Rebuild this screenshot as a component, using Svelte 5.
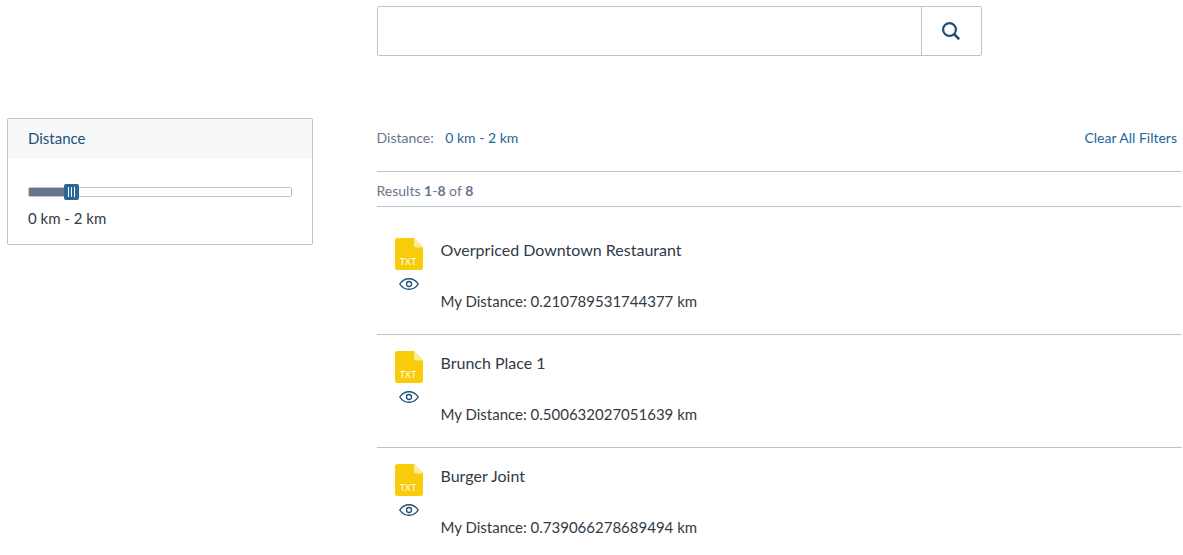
<script>
  const max = 14;
  let query = $state('');
  let distance = $state(2);

  let range = $derived(`0 km - ${distance} km`);
  let fill = $derived((distance / max) * 100);

  const results = [
    { title: 'Overpriced Downtown Restaurant', distance: '0.210789531744377' },
    { title: 'Brunch Place 1', distance: '0.500632027051639' },
    { title: 'Burger Joint', distance: '0.739066278689494' }
  ];

  function clearFilters() {
    distance = max;
  }
</script>

<div class="page">
  <form class="search" role="search" onsubmit={(e) => e.preventDefault()}>
    <input type="text" aria-label="Search" bind:value={query} />
    <button type="submit" aria-label="Search">
      <svg width="18" height="18" viewBox="0 0 18 18" fill="none" stroke="currentColor">
        <circle cx="7.5" cy="7.5" r="6.4" stroke-width="2.2" />
        <path d="M12 12l5.2 5.2" stroke-width="2.6" />
      </svg>
    </button>
  </form>

  <aside class="facet">
    <h2><label for="distance">Distance</label></h2>
    <div class="facet-body">
      <input
        id="distance"
        class="slider"
        type="range"
        min="0"
        {max}
        step="0.5"
        bind:value={distance}
        style="--fill: {fill}%"
      />
      <div class="caption">{range}</div>
    </div>
  </aside>

  <main>
    <div class="breadcrumb">
      <div>
        <span>Distance:</span>
        <button type="button" class="filter" onclick={clearFilters}>{range}</button>
      </div>
      <button type="button" class="clear" onclick={clearFilters}>Clear All Filters</button>
    </div>

    <div class="summary">Results <b>1</b>-<b>8</b> of <b>8</b></div>

    <div class="results">
      {#each results as result}
        <article>
          <div class="icons">
            <svg width="28" height="32" viewBox="0 0 28 32" aria-label="TXT" role="img">
              <path d="M2.5 0H19l9 9v20.5a2.5 2.5 0 0 1-2.5 2.5h-23A2.5 2.5 0 0 1 0 29.500v-27A2.5 2.5 0 0 1 2.5 0z" fill="#f8cc0b" />
              <path d="M19 0l9 9.500h-7a2 2 0 0 1-2-2z" fill="#fcea9d" />
              <text x="13" y="27" text-anchor="middle">TXT</text>
            </svg>
            <button type="button" class="quickview" aria-label="Quick view">
              <svg width="20" height="12" viewBox="0 0 20 12" fill="none" stroke="currentColor">
                <path d="M.8 6C3 2.5 6.2.7 10 .7S17 2.5 19.2 6C17 9.5 13.8 11.3 10 11.3S3 9.5.8 6z" stroke-width="1.4" />
                <circle cx="10" cy="6" r="2.5" stroke-width="1.3" />
              </svg>
            </button>
          </div>
          <div class="content">
            <h3>{result.title}</h3>
            <p>My Distance: {result.distance} km</p>
          </div>
        </article>
      {/each}
    </div>
  </main>
</div>

<style>
  :global(body) {
    background: #fff;
  }

  .page {
    display: grid;
    grid-template-columns: minmax(200px, 27.5fr) minmax(0, 72.5fr);
    column-gap: 64px;
    row-gap: 62px;
    align-items: start;
    padding: 6px 1px 0 7px;
    font-family: Lato, "Liberation Sans", sans-serif;
    font-size: 15px;
    line-height: 20px;
    color: #313a45;
    font-kerning: normal;
  }

  button {
    padding: 0;
    border: 0;
    background: none;
    font: inherit;
    color: #1d6699;
    cursor: pointer;
  }

  h2,
  h3,
  p {
    margin: 0;
    font-weight: 400;
  }

  .search {
    grid-column: 2;
    display: flex;
    box-sizing: border-box;
    width: calc(75% + 1px);
    height: 50px;
    border: 1px solid #bcc3ca;
    border-radius: 2px;
  }

  .search input {
    flex: 1;
    min-width: 0;
    padding: 0 16px;
    border: 0;
    outline: none;
    background: none;
    font: inherit;
    font-size: 16px;
  }

  .search button {
    display: flex;
    align-items: center;
    justify-content: center;
    width: 60px;
    border-left: 1px solid #bcc3ca;
    color: #1d4f76;
  }

  .facet {
    border: 1px solid #bcc3ca;
    border-radius: 2px;
  }

  .facet h2 {
    padding: 9px 20px 11px;
    background: #f7f8fa;
    font-size: 15px;
    color: #1d4f76;
  }

  .facet-body {
    padding: 24px 20px 16px;
  }

  .slider {
    appearance: none;
    display: block;
    width: 100%;
    height: 17px;
    margin: 0;
    background: none;
    cursor: pointer;
  }

  .slider::-webkit-slider-runnable-track {
    box-sizing: border-box;
    height: 10px;
    border: 1px solid #bcc3ca;
    border-radius: 2px;
    background: linear-gradient(#67768b, #67768b) no-repeat 0 0 / var(--fill) 100%;
  }

  .slider::-webkit-slider-thumb {
    appearance: none;
    width: 15px;
    height: 16px;
    margin-top: -4px;
    border: 0;
    border-radius: 2px;
    background:
      linear-gradient(#fff, #fff) no-repeat 4px 3px / 1px 10px,
      linear-gradient(#fff, #fff) no-repeat 7px 3px / 1px 10px,
      linear-gradient(#fff, #fff) no-repeat 10px 3px / 1px 10px,
      #296896;
  }

  .caption {
    margin-top: 8px;
  }

  .breadcrumb {
    display: flex;
    justify-content: space-between;
    align-items: flex-start;
    padding: 10px 5px 23px 0;
    border-bottom: 1px solid #bcc3ca;
    font-size: 14px;
    color: #67768b;
  }

  .filter {
    margin-left: 8px;
  }

  .summary {
    padding: 9px 0 5px;
    border-bottom: 1px solid #bcc3ca;
    font-size: 14px;
    color: #67768b;
  }

  .results {
    padding-top: 15px;
  }

  article {
    display: flex;
    gap: 18px;
    padding: 16px 18px 20px;
    border-bottom: 1px solid #bcc3ca;
  }

  article:last-child {
    padding-bottom: 0;
    border-bottom: 0;
  }

  .icons {
    display: flex;
    flex-direction: column;
    align-items: center;
    gap: 8px;
  }

  .icons text {
    font-size: 9px;
    fill: #fff;
  }

  .icons svg {
    display: block;
  }

  .quickview {
    color: #1d4f76;
  }

  .content h3 {
    padding: 2px 0;
    font-size: 16px;
  }

  .content p {
    padding: 29px 0 3px;
  }
</style>
